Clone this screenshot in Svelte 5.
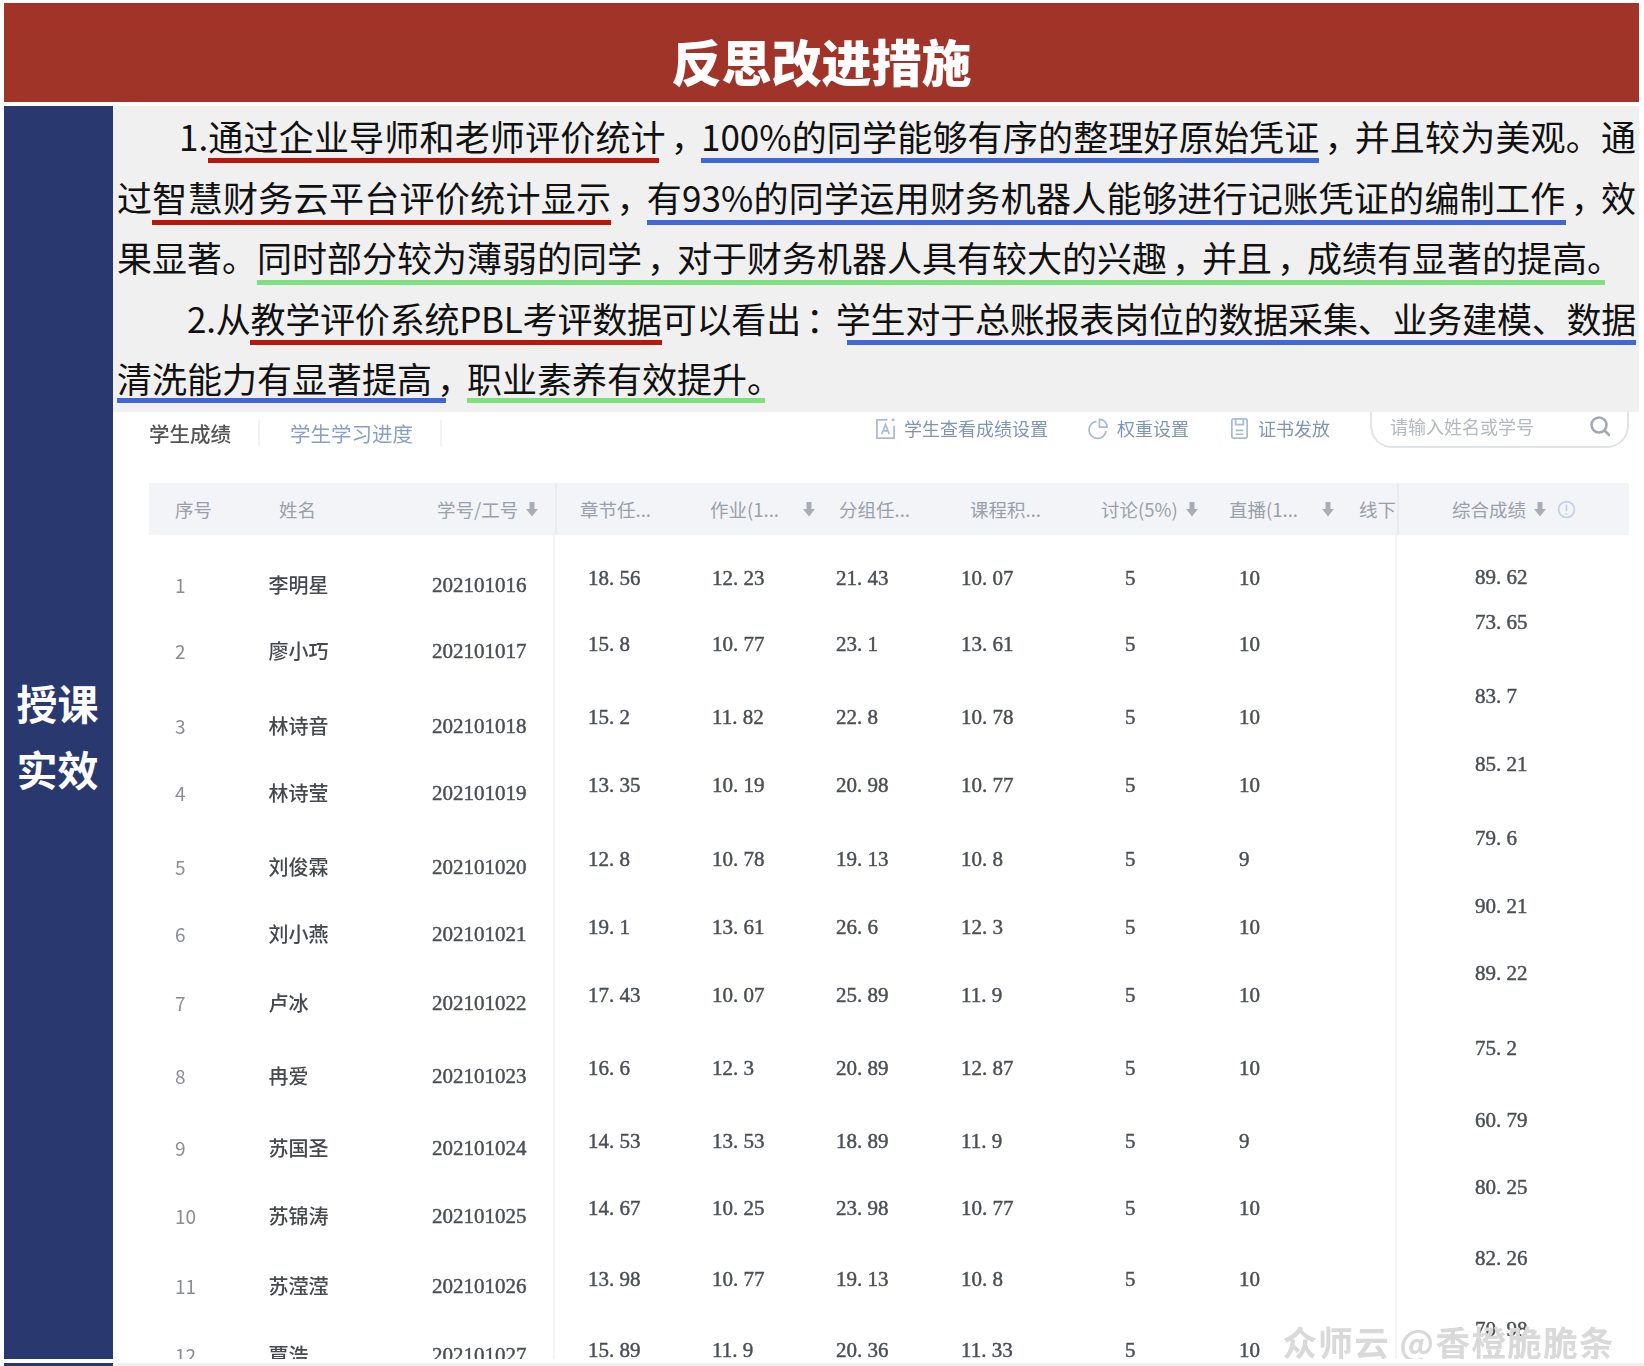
<script lang="ts">
	// row height = distance to the next row's centre, the three blocks drift apart in the source
	const students = [
		['1', '李明星', '202101016', 66],
		['2', '廖小巧', '202101017', 75],
		['3', '林诗音', '202101018', 67],
		['4', '林诗莹', '202101019', 74],
		['5', '刘俊霖', '202101020', 67],
		['6', '刘小燕', '202101021', 69],
		['7', '卢冰', '202101022', 73],
		['8', '冉爱', '202101023', 72],
		['9', '苏国圣', '202101024', 68],
		['10', '苏锦涛', '202101025', 70],
		['11', '苏滢滢', '202101026', 69],
		['12', '覃浩', '202101027', 69]
	];

	const grades = [
		['18. 56', '12. 23', '21. 43', '10. 07', '5', '10', 66],
		['15. 8', '10. 77', '23. 1', '13. 61', '5', '10', 73],
		['15. 2', '11. 82', '22. 8', '10. 78', '5', '10', 68],
		['13. 35', '10. 19', '20. 98', '10. 77', '5', '10', 74],
		['12. 8', '10. 78', '19. 13', '10. 8', '5', '9', 68],
		['19. 1', '13. 61', '26. 6', '12. 3', '5', '10', 68],
		['17. 43', '10. 07', '25. 89', '11. 9', '5', '10', 73],
		['16. 6', '12. 3', '20. 89', '12. 87', '5', '10', 73],
		['14. 53', '13. 53', '18. 89', '11. 9', '5', '9', 67],
		['14. 67', '10. 25', '23. 98', '10. 77', '5', '10', 71],
		['13. 98', '10. 77', '19. 13', '10. 8', '5', '10', 71],
		['15. 89', '11. 9', '20. 36', '11. 33', '5', '10', 71]
	];

	const totals = [
		['89. 62', 45],
		['73. 65', 74],
		['83. 7', 68],
		['85. 21', 74],
		['79. 6', 68],
		['90. 21', 67],
		['89. 22', 75],
		['75. 2', 72],
		['60. 79', 67],
		['80. 25', 71],
		['82. 26', 71],
		['70. 98', 71]
	];
</script>

{#snippet arrow()}
	<svg class="arrow" viewBox="0 0 12 16"><path d="M3.500 1h5v7H12l-6 7.500L0 8h3.500z" /></svg>
{/snippet}

<div class="page">
	<header class="title-bar"><h1>反思改进措施</h1></header>

	<div class="content">
		<aside class="side">
			<span>授课</span>
			<span>实效</span>
		</aside>

		<main class="main">
			<section class="summary">
				<p class="line first">1.<span class="u red trim-s">通过企业导师和老师评价统计</span><span class="cm">，</span><span class="u blue">100%的同学能够有序的整理好原始凭证</span><span class="cm">，</span>并且较为美观。通</p>
				<p class="line second">过<span class="u red">智慧财务云平台评价统计显示</span><span class="cm">，</span><span class="u blue">有93%的同学运用财务机器人能够进行记账凭证的编制工作</span><span class="cm">，</span>效</p>
				<p class="line third">果显著。<span class="u green trim">同时部分较为薄弱的同学<span class="cm">，</span>对于财务机器人具有较大的兴趣<span class="cm">，</span>并且<span class="cm">，</span>成绩有显著的提高。</span></p>
				<p class="line fourth">2.从<span class="u red">教学评价系统PBL考评数据</span>可以看出<span class="cm">：</span><span class="u blue inset">学生对于总账报表岗位的数据采集、业务建模、数据</span></p>
				<p class="line last"><span class="u blue over">清洗能力有显著提高</span><span class="cm">，</span><span class="u green trim">职业素养有效提升。</span></p>
			</section>

			<section class="scores">
				<div class="toolbar">
					<div class="tabs">
						<span class="tab active">学生成绩</span>
						<span class="tab">学生学习进度</span>
					</div>
					<div class="actions">
						<span class="action">
							<svg viewBox="0 0 22 24"><path d="M13 3H2v19h18V9" /><path d="M7 18l4-10 4 10M8.500 14.500h5" /><circle cx="19" cy="3" r="1.500" class="dot" /></svg>
							学生查看成绩设置
						</span>
						<span class="action">
							<svg viewBox="0 0 22 24"><path d="M9 4.500a9 9 0 1 0 10 10" /><path d="M12 2.500a8 8 0 0 1 8 8h-8z" /></svg>
							权重设置
						</span>
						<span class="action">
							<svg viewBox="0 0 20 24"><rect x="2" y="2" width="16" height="20" rx="2" /><path d="M6 2v6h8V2M6 14h8M6 18h8" /></svg>
							证书发放
						</span>
						<div class="search">
							<span>请输入姓名或学号</span>
							<svg viewBox="0 0 22 22"><circle cx="10" cy="10" r="7.500" /><path d="M15.500 15.500 20 20" /></svg>
						</div>
					</div>
				</div>

				<div class="table">
					<div class="thead">
						<span>序号</span>
						<span>姓名</span>
						<span class="sort near">学号/工号 {@render arrow()}</span>
						<span>章节任...</span>
						<span class="sort far">作业(1... {@render arrow()}</span>
						<span>分组任...</span>
						<span>课程积...</span>
						<span class="sort near">讨论(5%) {@render arrow()}</span>
						<span class="sort far">直播(1... {@render arrow()}</span>
						<span class="cut">线下成绩</span>
						<span class="sort near total-head">
							综合成绩 {@render arrow()}
							<svg class="info" viewBox="0 0 18 18"><circle cx="9" cy="9" r="7.500" /><path d="M9 4.500v6M9 12.500v1.500" /></svg>
						</span>
					</div>

					<div class="tbody">
						<div class="block names">
							{#each students as [no, name, id, h]}
								<div class="row" style="height: {h}px">
									<span class="no">{no}</span>
									<span class="name">{name}</span>
									<span class="num">{id}</span>
								</div>
							{/each}
						</div>
						<div class="block grades">
							{#each grades as g}
								<div class="row" style="height: {g[6]}px">
									{#each g.slice(0, 6) as v}
										<span class="num">{v}</span>
									{/each}
								</div>
							{/each}
						</div>
						<div class="block totals">
							{#each totals as [v, h]}
								<div class="row" style="height: {h}px"><span class="num">{v}</span></div>
							{/each}
						</div>
					</div>
				</div>
				<div class="mark">众师云 @香橙脆脆条</div>
			</section>
		</main>
	</div>

	<div class="foot">
		<div class="foot-side"></div>
		<div class="foot-rest"></div>
	</div>
</div>

<style>
	:global(body) {
		background: #fff;
		font-family: 'Noto Sans CJK SC', 'Noto Sans', sans-serif;
	}

	.page {
		width: 1644px;
		height: 1366px;
		overflow: hidden;
		display: flex;
		flex-direction: column;
		padding-top: 3px;
		box-sizing: border-box;
	}

	/* Title */
	.title-bar {
		margin: 0 5px 0 4px;
		height: 99px;
		flex: none;
		background: #a03428;
		display: flex;
		justify-content: center;
		align-items: flex-start;
	}

	.title-bar h1 {
		margin: 22px 0 0;
		font-size: 50px;
		line-height: 70px;
		font-weight: 900;
		color: #fff;
	}

	/* Body */
	.content {
		margin: 4px 0 0 4px;
		height: 1253px;
		flex: none;
		display: flex;
	}

	.side {
		width: 109px;
		flex: none;
		background: #29386f;
		display: flex;
		flex-direction: column;
		align-items: center;
		justify-content: center;
		padding: 4px 2px 0 0;
		box-sizing: border-box;
		color: #fff;
		font-size: 41px;
		line-height: 66px;
		font-weight: 700;
	}

	.main {
		flex: 1;
		min-width: 0;
		display: flex;
		flex-direction: column;
	}

	/* Summary text */
	.summary {
		margin-right: 5px;
		height: 306px;
		flex: none;
		background: #f0f0f0;
		padding: 0 3px 0 4px;
		box-sizing: border-box;
		font-size: 35px;
		line-height: 60.5px;
		color: #111;
	}

	.line {
		margin: 0;
		white-space: nowrap;
		text-align: justify;
		text-align-last: justify;
		--drop: 3px;
	}

	.first {
		padding-left: 62px;
		--drop: 2px;
	}

	.third {
		margin-right: 32px;
	}

	.fourth {
		padding-left: 70px;
		letter-spacing: -0.3px;
		--drop: 2px;
	}

	.last {
		text-align-last: left;
		--drop: 0px;
	}

	.cm {
		padding-left: 5px;
		margin-right: -5px;
	}

	/* hand drawn rules in the slide, not real underlines */
	.u {
		padding-bottom: var(--drop);
		background-image: linear-gradient(var(--rule), var(--rule));
		background-repeat: no-repeat;
		background-position: left bottom;
		background-size: 100% 5px;
	}

	.red {
		--rule: #b8170b;
	}

	.blue {
		--rule: #4166d5;
	}

	.green {
		--rule: #7fe07f;
	}

	.trim {
		background-size: calc(100% - 17px) 5px;
	}

	.trim-s {
		background-size: calc(100% - 7px) 5px;
	}

	.inset {
		background-position: right bottom;
		background-size: calc(100% - 11px) 5px;
	}

	.over {
		padding-right: 14px;
		margin-right: -14px;
	}

	/* Scores screenshot */
	.scores {
		position: relative;
		flex: 1;
		min-height: 0;
		background: #fff;
		overflow: hidden;
	}

	.toolbar {
		height: 71px;
		display: flex;
		padding-left: 36px;
		filter: blur(0.5px);
	}

	.tabs {
		display: flex;
		align-items: flex-start;
		padding-top: 8px;
		font-size: 20.500px;
		line-height: 26px;
		color: #8a9fc6;
	}

	.tab {
		padding: 0 27px 0 30px;
		border-right: 2px solid #f1f2f4;
	}

	.tab:first-child {
		padding-left: 0;
	}

	.tab.active {
		color: #555;
		font-weight: 500;
	}

	.actions {
		margin-left: 433px;
		display: flex;
		gap: 40px;
		align-items: flex-start;
	}

	.action {
		display: flex;
		align-items: center;
		gap: 8px;
		height: 32px;
		font-size: 18px;
		color: #7f95b8;
	}

	.action svg {
		height: 23px;
		width: 21px;
		fill: none;
		stroke: #a9bad4;
		stroke-width: 1.800;
	}

	.action .dot {
		fill: #a9bad4;
		stroke: none;
	}

	.search {
		width: 259px;
		height: 36px;
		box-sizing: border-box;
		border: 2px solid #e0e3e9;
		border-top: 0;
		border-radius: 0 0 22px 22px;
		display: flex;
		align-items: flex-start;
		justify-content: space-between;
		padding: 0 16px 0 18px;
		font-size: 18px;
		line-height: 28px;
		color: #b4b8c0;
	}

	.search svg {
		width: 22px;
		height: 22px;
		margin-top: 3px;
		fill: none;
		stroke: #a3a8b2;
		stroke-width: 2.600;
		stroke-linecap: round;
	}

	/* Table */
	.table {
		margin-left: 36px;
		width: 1480px;
		filter: blur(0.5px);
	}

	.thead {
		height: 52px;
		padding-left: 26px;
		background:
			linear-gradient(#e9ebf0, #e9ebf0) 406px 0 / 2px 100% no-repeat,
			linear-gradient(#e9ebf0, #e9ebf0) 1248px 0 / 2px 100% no-repeat,
			#f2f4f8;
		display: grid;
		grid-template-columns: 104px 158px 143px 130px 129px 131px 131px 128px 130px 38px 1fr;
		align-items: center;
		font-size: 18.500px;
		color: #9aa0ab;
		white-space: nowrap;
	}

	.sort {
		display: flex;
		align-items: center;
	}

	.near {
		gap: 8px;
	}

	.far {
		gap: 24px;
	}

	.cut {
		overflow: hidden;
	}

	.total-head {
		padding-left: 55px;
	}

	.arrow {
		width: 12px;
		height: 16px;
		fill: #a9adb6;
	}

	.info {
		width: 19px;
		height: 19px;
		margin-left: 3px;
		fill: none;
		stroke: #c3cfe4;
		stroke-width: 1.500;
	}

	.tbody {
		display: flex;
		height: 825px;
		overflow: hidden;
	}

	.block {
		flex: none;
		box-sizing: border-box;
	}

	.row {
		display: grid;
		align-items: start;
		line-height: 30px;
		white-space: nowrap;
	}

	.num {
		font-family: 'Liberation Serif', serif;
		font-size: 21px;
		color: #4a4e56;
		-webkit-text-stroke: 0.45px #4a4e56;
	}

	.names {
		width: 406px;
		padding: 35px 0 0 26px;
		border-right: 2px solid #f3f4f6;
	}

	.names .row {
		grid-template-columns: 93.500px 163.500px 1fr;
	}

	.no {
		font-size: 19px;
		color: #8a8d93;
	}

	.name {
		font-size: 20px;
		font-weight: 500;
		color: #45484e;
	}

	.grades {
		width: 842px;
		padding: 27.500px 0 0 33px;
		border-right: 2px solid #f3f4f6;
	}

	.grades .row {
		grid-template-columns: 124px 124px 125px 164px 114px 1fr;
	}

	.totals {
		flex: 1;
		padding: 26.500px 0 0 78px;
	}

	/* Watermark */
	.mark {
		position: absolute;
		right: 29px;
		bottom: -2px;
		font-size: 34.500px;
		line-height: 40px;
		letter-spacing: 1.400px;
		font-weight: 700;
		color: #d9d9d9;
		white-space: nowrap;
	}

	/* Bottom edge */
	.foot {
		margin-top: 4px;
		flex: 1;
		display: flex;
		margin-left: 4px;
	}

	.foot-side {
		width: 109px;
		background: #29386f;
	}

	.foot-rest {
		flex: 1;
		margin-left: 4px;
		background: #f0f0f0;
	}
</style>
